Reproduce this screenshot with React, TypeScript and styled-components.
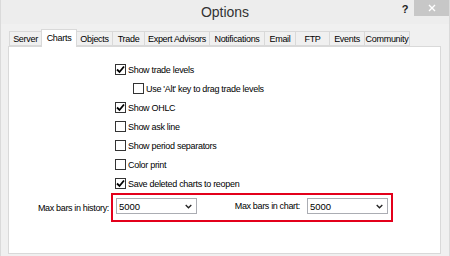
import styled, { createGlobalStyle } from "styled-components";

const GlobalStyle = createGlobalStyle`
  html, body {
    margin: 0;
    padding: 0;
    background: #f0f0f0;
  }
  body {
    font-family: "Liberation Sans", Arial, sans-serif;
  }
`;

export const Window = styled.div`
  width: 450px;
  height: 256px;
  box-sizing: border-box;
  background: #f0f0f0;
  border-left: 1px solid #dadada;
  border-right: 1px solid #dadada;
  overflow: hidden;
  display: flex;
  flex-direction: column;
`;

export const TitleBar = styled.div`
  height: 24px;
  display: grid;
  grid-template-columns: 1fr auto 1fr;
  background: #ededed;
`;

export const Title = styled.div`
  font-family: "Segoe UI", "Liberation Sans", Arial, sans-serif;
  font-size: 14px;
  color: #333;
  line-height: 24px;
`;

export const TitleButtons = styled.div`
  display: flex;
  justify-content: flex-end;
  align-items: flex-start;
`;

export const HelpButton = styled.div`
  width: 12px;
  margin-right: 3px;
  font-size: 11px;
  font-weight: bold;
  color: #222;
  line-height: 18px;
  text-align: center;
`;

export const CloseButton = styled.div`
  width: 35px;
  height: 16px;
  background: #c7c7c7;
  display: flex;
  align-items: center;
  justify-content: center;
`;

export const Body = styled.div`
  flex: 1;
  padding: 5px 7px 2px 7px;
  display: flex;
  flex-direction: column;
`;

export const TabStrip = styled.div`
  display: flex;
  align-items: flex-end;
  height: 17px;
  padding-left: 1px;
  position: relative;
  z-index: 1;
`;

export const Tab = styled.div<{ $w: number; $active?: boolean }>`
  box-sizing: border-box;
  width: ${(p) => p.$w + 1}px;
  margin-right: -1px;
  height: ${(p) => (p.$active ? 18 : 15)}px;
  margin-bottom: ${(p) => (p.$active ? -1 : 0)}px;
  border: 1px solid #d9d9d9;
  border-bottom: ${(p) => (p.$active ? "none" : "1px solid #d9d9d9")};
  background: ${(p) => (p.$active ? "#ffffff" : "#f0f0f0")};
  position: relative;
  z-index: ${(p) => (p.$active ? 2 : 1)};
  font-size: 9px;
  letter-spacing: -0.3px;
  color: #000;
  display: flex;
  align-items: center;
  justify-content: center;
  padding-bottom: ${(p) => (p.$active ? 2 : 0)}px;
`;

export const Panel = styled.div`
  flex: 1;
  box-sizing: border-box;
  margin-right: 1px;
  background: #fff;
  border: 1px solid #d9d9d9;
  padding: 13px 0 0 0;
  display: flex;
  flex-direction: column;
`;

export const CheckRow = styled.div<{ $indent?: number }>`
  height: 19px;
  display: flex;
  align-items: center;
  padding-left: ${(p) => 106 + (p.$indent || 0)}px;
  gap: 2px;
  font-size: 9px;
  letter-spacing: -0.3px;
  color: #000;
`;

export const Box = styled.div`
  box-sizing: border-box;
  width: 11px;
  height: 11px;
  border: 1px solid #333;
  background: #fff;
  display: flex;
  align-items: center;
  justify-content: center;
`;

export const FieldRow = styled.div`
  display: flex;
  align-items: center;
  padding-left: 31px;
`;

export const FieldLabel = styled.div<{ $w: number }>`
  width: ${(p) => p.$w}px;
  flex-shrink: 0;
  display: flex;
  justify-content: flex-end;
  font-size: 9px;
  letter-spacing: -0.35px;
  white-space: nowrap;
  color: #000;
`;

export const Highlight = styled.div`
  margin-left: 2px;
  border: 2px solid #e3001b;
  padding: 3px 3px 6px 3px;
  display: flex;
  align-items: center;
`;

export const Combo = styled.div<{ $gap?: number }>`
  box-sizing: border-box;
  width: 81px;
  height: 16px;
  margin-left: ${(p) => p.$gap || 0}px;
  border: 1px solid #abadb3;
  background: #fff;
  display: flex;
  align-items: center;
  justify-content: space-between;
  padding: 0 4px 0 2px;
  font-size: 9.5px;
  color: #000;
`;

const Check = () => (
  <svg width="9" height="9" viewBox="0 0 9 9">
    <path d="M1 4.5 L3.5 7 L8 1.5" fill="none" stroke="#000" strokeWidth="1.8" />
  </svg>
);

const Chevron = () => (
  <svg width="7" height="5" viewBox="0 0 7 5">
    <path d="M0.7 1 L3.5 3.8 L6.3 1" fill="none" stroke="#222" strokeWidth="1.3" />
  </svg>
);

const CloseIcon = () => (
  <svg width="8" height="8" viewBox="0 0 8 8">
    <path d="M1 1 L7 7 M7 1 L1 7" stroke="#fff" strokeWidth="1.4" />
  </svg>
);

const tabs: [string, number][] = [
  ["Server", 32],
  ["Charts", 35],
  ["Objects", 36],
  ["Trade", 32],
  ["Expert Advisors", 65],
  ["Notifications", 55],
  ["Email", 31],
  ["FTP", 34],
  ["Events", 35],
  ["Community", 45],
];

const options: { label: string; checked: boolean; indent?: number }[] = [
  { label: "Show trade levels", checked: true },
  { label: "Use 'Alt' key to drag trade levels", checked: false, indent: 18 },
  { label: "Show OHLC", checked: true },
  { label: "Show ask line", checked: false },
  { label: "Show period separators", checked: false },
  { label: "Color print", checked: false },
  { label: "Save deleted charts to reopen", checked: true },
];

export default function App() {
  return (
    <>
      <GlobalStyle />
      <Window>
        <TitleBar>
          <div />
          <Title>Options</Title>
          <TitleButtons>
            <HelpButton>?</HelpButton>
            <CloseButton>
              <CloseIcon />
            </CloseButton>
          </TitleButtons>
        </TitleBar>
        <Body>
          <TabStrip>
            {tabs.map(([name, w]) => (
              <Tab key={name} $w={w} $active={name === "Charts"}>
                {name}
              </Tab>
            ))}
          </TabStrip>
          <Panel>
            {options.map((o) => (
              <CheckRow key={o.label} $indent={o.indent}>
                <Box>{o.checked && <Check />}</Box>
                <span>{o.label}</span>
              </CheckRow>
            ))}
            <FieldRow>
              <FieldLabel $w={69}>Max bars in history:</FieldLabel>
              <Highlight>
                <Combo>
                  <span>5000</span>
                  <Chevron />
                </Combo>
                <FieldLabel $w={103}>Max bars in chart:</FieldLabel>
                <Combo $gap={7}>
                  <span>5000</span>
                  <Chevron />
                </Combo>
              </Highlight>
            </FieldRow>
          </Panel>
        </Body>
      </Window>
    </>
  );
}
